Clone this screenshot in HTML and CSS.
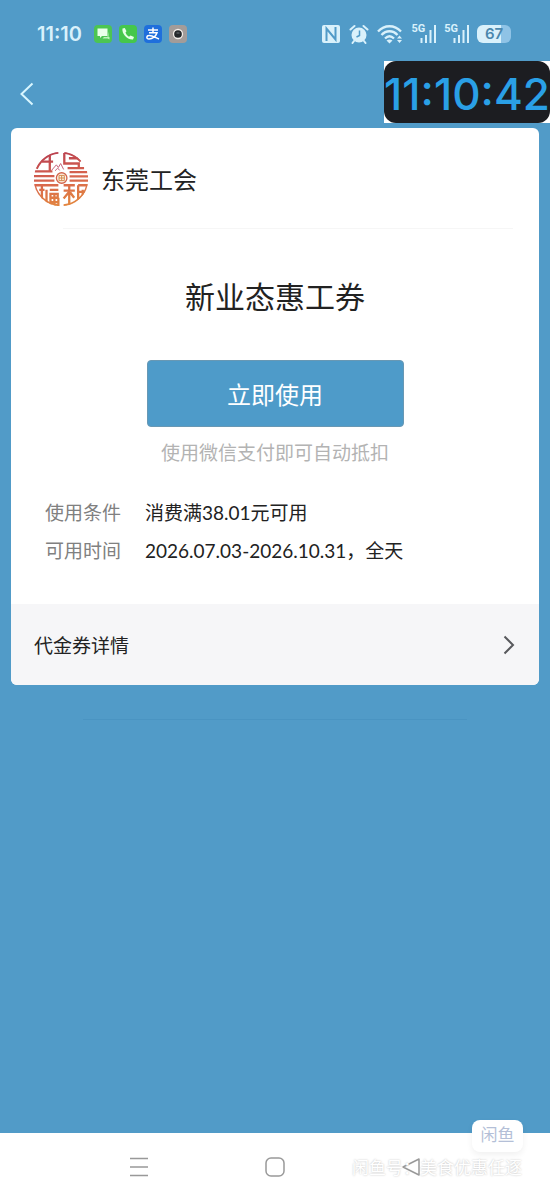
FILE: index.html
```html
<!DOCTYPE html>
<html lang="zh-CN">
<head>
    <meta charset="UTF-8">
    <meta name="viewport" content="width=device-width, initial-scale=1.0">
    <title>新业态惠工券</title>
    <link rel="stylesheet" href="styles.css">
</head>
<body>
    <div class="status-bar">
        <div class="status-left">
            <span class="time">11:10</span>
            <svg class="app-icon" viewBox="0 0 18 18">
                <rect width="18" height="18" rx="4" fill="#4cc552"/>
                <path d="M3.500 3.500h10v7.500H8l-2 2v-2H3.500z" fill="#e9ffe9"/>
                <path d="M14.500 6.500v5.500h1v2.500l-2-1H8.500L10 12h3.500z" fill="#b9f2b8"/>
            </svg>
            <svg class="app-icon" viewBox="0 0 18 18">
                <rect width="18" height="18" rx="4" fill="#45c74b"/>
                <path d="M3.500 3.500c-1 5 4.500 11.500 10.500 11l1-2.500-3.500-1.500-1.500 1.200C8 10.500 7 9 6.500 7.500l1-1.200L5.800 3z" fill="#e4ffe6"/>
            </svg>
            <svg class="app-icon" viewBox="0 0 18 18">
                <rect width="18" height="18" rx="4" fill="#1f6fdc"/>
                <path d="M4 5h10M9 2.500V7.500M5 7.800h8C12 11 8.500 14 5 14c-3 0-2.800-3.500.300-3.500 3 0 6 2 9.700 3.500" fill="none" stroke="#fff" stroke-width="1.500"/>
            </svg>
            <svg class="app-icon" viewBox="0 0 18 18">
                <rect width="18" height="18" rx="4" fill="#a39c99"/>
                <circle cx="9" cy="9" r="4.500" fill="#24282b" stroke="#f3eee9" stroke-width="1.300"/>
                <path d="M7.500 8h3" stroke="#6f7478"/>
            </svg>
        </div>
        <div class="status-right">
            <svg width="20" height="20" viewBox="0 0 20 20">
                <rect x="1" y="1" width="18" height="18" rx="2" fill="#d9f1fb"/>
                <path d="M5.500 17V4.500L14.500 15.500V3" fill="none" stroke="#519bc8" stroke-width="2"/>
            </svg>
            <svg width="20" height="20" viewBox="0 0 20 20">
                <circle cx="10" cy="11" r="7.500" fill="#d9f1fb"/>
                <path d="M1.500 5.500 5.500 2M18.500 5.500 14.500 2M5 17l-1.500 2M15 17l1.500 2" stroke="#d9f1fb" stroke-width="2" stroke-linecap="round"/>
                <path d="M10.500 6.500v5L7.500 13" fill="none" stroke="#519bc8" stroke-width="1.500"/>
            </svg>
            <svg width="26" height="20" viewBox="0 0 26 20">
                <path d="M1 7.500C7.500.500 17.500.500 24 7.500M4.500 11C9 6 16 6 20.500 11M8 14.500c3-3 6-3 9 0" fill="none" stroke="#d9f1fb" stroke-width="2.300"/>
                <path d="M9.500 16.500c2-1.500 4-1.500 6 0l-3 3z" fill="#d9f1fb"/>
                <path d="M20 14.500l2.500-3 2.500 3zM20 16l2.500 3 2.500-3z" fill="#d9f1fb"/>
            </svg>
            <div class="signal">
                <span>5G</span>
                <svg width="16" height="20" viewBox="0 0 16 20">
                    <path d="M1.500 14v5M6 11v8M10.500 6v13M15 1v18" stroke="#d9f1fb" stroke-width="2"/>
                </svg>
            </div>
            <div class="signal">
                <span>5G</span>
                <svg width="16" height="20" viewBox="0 0 16 20">
                    <path d="M1.500 14v5M6 11v8M10.500 6v13M15 1v18" stroke="#d9f1fb" stroke-width="2"/>
                </svg>
            </div>
            <div class="battery">67</div>
        </div>
    </div>

    <header class="top-bar">
        <button type="button" class="back" aria-label="返回">
            <svg width="14" height="24" viewBox="0 0 14 24">
                <path d="M12.500 1.500 1.500 12l11 10.500" fill="none" stroke="#d8f6ff" stroke-width="2"/>
            </svg>
        </button>
        <div class="clock"><span>11:10:42</span></div>
    </header>

    <main class="content">
        <section class="card">
            <div class="merchant">
                <svg class="logo" viewBox="14 18 168 170">
                    <defs>
                        <linearGradient id="ink" x1="80" y1="20" x2="110" y2="186" gradientUnits="userSpaceOnUse">
                            <stop offset="0" stop-color="#b94050"/>
                            <stop offset="0.5" stop-color="#d8654e"/>
                            <stop offset="1" stop-color="#e3873f"/>
                        </linearGradient>
                        <clipPath id="disc"><circle cx="98" cy="103" r="83"/></clipPath>
                    </defs>
                    <g fill="none" stroke="url(#ink)" stroke-width="7" clip-path="url(#disc)">
                        <path d="M24 72A80 80 0 0 1 90 23M108 23A80 80 0 0 1 158 50M18 122A80 80 0 0 0 90 183M106 183A80 80 0 0 0 178 122"/>
                        <path d="M40 50h34M64 32v48M18 80h54M16 94h62M16 108h62"/>
                        <path d="M108 24v32h44v12M122 40h30M118 70h50M124 82h54"/>
                        <path d="M124 95h56M124 108h56"/>
                        <path d="M16 122h74M32 136h16M40 124v46M54 136v46M64 136h26M66 148h22v12H66zM66 162v26M78 148v38M90 160v26M66 173h26"/>
                        <path d="M106 122h34M106 138h34M123 122v62M121 144l-15 18M126 144l12 16M150 122h30M150 122v46M164 136v30M150 142h26"/>
                    </g>
                    <path d="M70 76 84 60l6 8 7-12 9 18M80 78l8-8 6 7" fill="none" stroke="#c65f78" stroke-width="3"/>
                    <circle cx="100" cy="100" r="16" fill="#fff3e8" stroke="#d2664d" stroke-width="4"/>
                    <path d="M92 92h16v16H92zM92 100h16M100 92v16" fill="none" stroke="#d28a4a" stroke-width="3"/>
                </svg>
                <h2>东莞工会</h2>
            </div>
            <div class="coupon">
                <h1>新业态惠工券</h1>
                <button type="button" class="use-btn">立即使用</button>
                <p class="tip">使用微信支付即可自动抵扣</p>
            </div>
            <dl class="rules">
                <dt>使用条件</dt>
                <dd>消费满38.01元可用</dd>
                <dt>可用时间</dt>
                <dd>2026.07.03-2026.10.31，全天</dd>
            </dl>
            <a href="#" class="detail">
                <span>代金券详情</span>
                <svg width="12" height="20" viewBox="0 0 12 20">
                    <path d="M1.500 1.500 10 10l-8.500 8.500" fill="none" stroke="#58595d" stroke-width="2"/>
                </svg>
            </a>
        </section>
        <div class="page-line"></div>
    </main>

    <nav class="nav-bar">
        <button type="button" aria-label="菜单">
            <svg width="20" height="20" viewBox="0 0 20 20">
                <path d="M1 1.500h18M1 10h18M1 18.500h18" stroke="#999" stroke-width="1.500"/>
            </svg>
        </button>
        <button type="button" aria-label="主页">
            <svg width="20" height="20" viewBox="0 0 20 20">
                <rect x="1" y="1" width="18" height="18" rx="5" fill="none" stroke="#999" stroke-width="1.500"/>
            </svg>
        </button>
        <button type="button" aria-label="后退">
            <svg width="20" height="20" viewBox="0 0 20 20">
                <path d="M18 2v16L2 10z" fill="none" stroke="#999" stroke-width="1.500" stroke-linejoin="round"/>
            </svg>
        </button>
        <span class="watermark">闲鱼号：美食优惠任逐</span>
        <span class="tag">闲鱼</span>
    </nav>
</body>
</html>
```

FILE: styles.css
```css
* {
    box-sizing: border-box;
}
body {
    margin: 0;
    min-height: 100vh;
    display: flex;
    flex-direction: column;
    font-family: Lato, "Noto Sans CJK SC", sans-serif;
    font-size: 19px;
    color: #222;
    background-color: #519bc8;
}
h1, h2, p, dl, dd {
    margin: 0;
    font-weight: normal;
}
button {
    padding: 0;
    border: none;
    background: none;
    font-family: inherit;
    cursor: pointer;
}
svg {
    display: block;
    flex-shrink: 0;
}

/* status bar */
.status-bar {
    display: flex;
    justify-content: space-between;
    align-items: center;
    height: 60px;
    padding: 8px 39px 0 37px;
    color: #d9f1fb;
}
.status-left {
    display: flex;
    align-items: center;
    gap: 7px;
}
.time {
    margin-right: 5px;
    font-family: Inter, sans-serif;
    font-size: 20px;
    font-weight: 600;
}
.app-icon {
    width: 18px;
    height: 18px;
}
.status-right {
    display: flex;
    align-items: center;
    gap: 8px;
}
.signal {
    display: flex;
    align-items: flex-start;
}
.signal span {
    margin-right: -5px;
    font-family: Roboto, sans-serif;
    font-size: 11px;
    line-height: 10px;
    font-weight: 700;
}
.battery {
    width: 34px;
    height: 18px;
    border-radius: 6px;
    background: linear-gradient(to right, #d9f1fb 70%, #8fc3e6 70%);
    color: #4b88ad;
    font-family: Inter, sans-serif;
    font-size: 15px;
    line-height: 18px;
    font-weight: 600;
    text-align: center;
}

/* top bar */
.top-bar {
    display: flex;
    justify-content: space-between;
    align-items: center;
    height: 68px;
    padding-left: 20px;
}
.clock {
    width: 166px;
    margin-bottom: 4px;
    background-color: #fff;
}
.clock span {
    display: block;
    height: 62px;
    border-radius: 12px;
    background-color: #1c1d21;
    color: #2aa0e6;
    font-family: Inter, sans-serif;
    font-size: 44px;
    line-height: 66px;
    font-weight: 500;
    text-align: center;
}

/* coupon card */
.content {
    flex: 1;
    padding: 0 11px;
}
.card {
    border-radius: 6px;
    background-color: #fff;
    overflow: hidden;
}
.merchant {
    display: flex;
    align-items: center;
    gap: 12px;
    height: 101px;
    padding: 0 22px;
    background: linear-gradient(#f6f6f6, #f6f6f6) no-repeat 52px 100% / calc(100% - 78px) 1px;
}
.logo {
    width: 56px;
    height: 56px;
}
.merchant h2 {
    font-size: 24px;
}
.coupon {
    display: flex;
    flex-direction: column;
    align-items: center;
    padding-top: 44px;
}
.coupon h1 {
    font-size: 30px;
    line-height: 46px;
}
.use-btn {
    width: 257px;
    height: 67px;
    margin-top: 41px;
    border: 1px solid #6898b4;
    border-radius: 4px;
    background-color: #4e9bc9;
    color: #fff;
    font-size: 24px;
}
.tip {
    margin-top: 12px;
    line-height: 28px;
    color: #b3b3b3;
}
.rules {
    display: grid;
    grid-template-columns: 100px 1fr;
    padding: 27px 34px 34px;
    line-height: 38px;
}
.rules dt {
    color: #808080;
}
.detail {
    display: flex;
    justify-content: space-between;
    align-items: center;
    height: 81px;
    padding: 0 24px 0 23px;
    background-color: #f6f6f8;
    color: #222;
    text-decoration: none;
}
.page-line {
    height: 1px;
    margin: 34px 72px 0;
    background-color: #4a94c2;
}

/* system navigation */
.nav-bar {
    position: relative;
    display: flex;
    justify-content: center;
    align-items: center;
    gap: 116px;
    height: 67px;
    background-color: #fff;
}
.watermark {
    position: absolute;
    right: 28px;
    top: 22px;
    color: #fff;
    font-size: 17px;
    line-height: 26px;
    text-shadow: 0 0 2px #bbb;
    pointer-events: none;
}
.tag {
    position: absolute;
    right: 27px;
    top: -13px;
    width: 51px;
    height: 32px;
    border-radius: 8px;
    background-color: #fff;
    box-shadow: 0 3px 6px rgba(0, 0, 0, 0.06);
    color: #b4bfd7;
    font-size: 17px;
    line-height: 30px;
    text-align: center;
}
```
